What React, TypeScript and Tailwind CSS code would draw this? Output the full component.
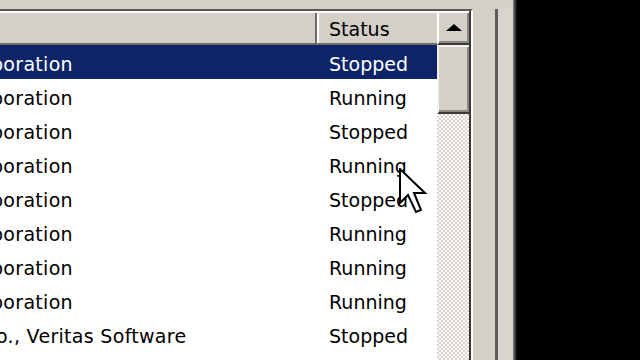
const rows = [
  { name: "poration", shift: "ml-[-9px]", status: "Stopped", selected: true },
  { name: "poration", shift: "ml-[-9px]", status: "Running" },
  { name: "poration", shift: "ml-[-9px]", status: "Stopped" },
  { name: "poration", shift: "ml-[-9px]", status: "Running" },
  { name: "poration", shift: "ml-[-9px]", status: "Stopped" },
  { name: "poration", shift: "ml-[-9px]", status: "Running" },
  { name: "poration", shift: "ml-[-9px]", status: "Running" },
  { name: "poration", shift: "ml-[-9px]", status: "Running" },
  { name: "o., Veritas Software", shift: "ml-[-4px]", status: "Stopped" },
  { name: "poration", shift: "ml-[-9px]", status: "Running" },
];

function Cursor() {
  return (
    <svg className="absolute left-[399px] top-[168px]" width="30" height="48" viewBox="0 0 30 48">
      <polygon
        points="1,1 1,35 9,27 17,44 22,42 15,25 26,25"
        fill="white"
        stroke="black"
        strokeWidth="2"
        strokeLinejoin="miter"
      />
    </svg>
  );
}

export default function App() {
  return (
    <div className="relative w-[640px] h-[360px] bg-black flex overflow-hidden font-['DejaVu_Sans',sans-serif] text-[19px] text-black">
      {/* window */}
      <div className="w-[513px] bg-[#d4d0c8] flex flex-col">
        <div className="h-[9px] shrink-0" />
        <div className="flex-1 flex min-h-0">
          {/* list view */}
          <div className="w-[473px] flex flex-col border-t-2 border-t-[#5a5854] border-r-2 border-r-white">
            <div className="flex-1 flex min-h-0">
              {/* columns */}
              <div className="w-[437px] flex flex-col bg-white overflow-hidden">
                <div className="h-[34px] shrink-0 flex bg-[#d4d0c8] border-t-2 border-t-white border-b-2 border-b-[#6e6c68]">
                  <div className="flex-1 border-r-2 border-r-[#6e6c68]" />
                  <div className="w-[120px] flex items-center pl-[10px] pt-[3px] border-l-2 border-l-white">Status</div>
                </div>
                {rows.map((r, i) => (
                  <div
                    key={i}
                    className={`h-[34px] shrink-0 flex items-center pt-[4px] ${r.selected ? "bg-[#0c2468] text-white" : ""}`}
                  >
                    <div className="flex-1 overflow-hidden whitespace-nowrap tracking-[0.3px]">
                      <span className={`inline-block ${r.shift}`}>{r.name}</span>
                    </div>
                    <div className="w-[120px] pl-[12px] whitespace-nowrap">{r.status}</div>
                  </div>
                ))}
              </div>
              {/* scrollbar */}
              <div className="w-[34px] flex flex-col border-r-2 border-r-[#3c3a38]">
                <div className="h-[34px] shrink-0 flex items-center justify-center bg-[#d4d0c8] border-t-2 border-l-2 border-t-white border-l-white border-b-2 border-b-[#3c3a38] shadow-[inset_-2px_-2px_0_#8a8884]">
                  <div className="w-0 h-0 border-l-[8px] border-r-[8px] border-b-[7px] border-l-transparent border-r-transparent border-b-black mb-[2px]" />
                </div>
                <div className="h-[69px] shrink-0 bg-[#d4d0c8] border-t-2 border-l-2 border-t-[#f4f2ee] border-l-[#f4f2ee] border-b-2 border-b-[#3c3a38] shadow-[inset_-2px_-2px_0_#8a8884]" />
                <div className="flex-1 bg-[repeating-conic-gradient(#d8d4cc_0_25%,#fbfaf8_0_50%)] bg-[length:4px_4px]" />
              </div>
            </div>
          </div>
          {/* frame edge */}
          <div className="w-[22px] shrink-0" />
          <div className="w-[3px] shrink-0 bg-[#5e5c58]" />
          <div className="flex-1 bg-[#d8d4ce]" />
        </div>
      </div>
      <div className="w-[5px] bg-gradient-to-r from-[#8a8884] to-black" />
      <Cursor />
    </div>
  );
}
